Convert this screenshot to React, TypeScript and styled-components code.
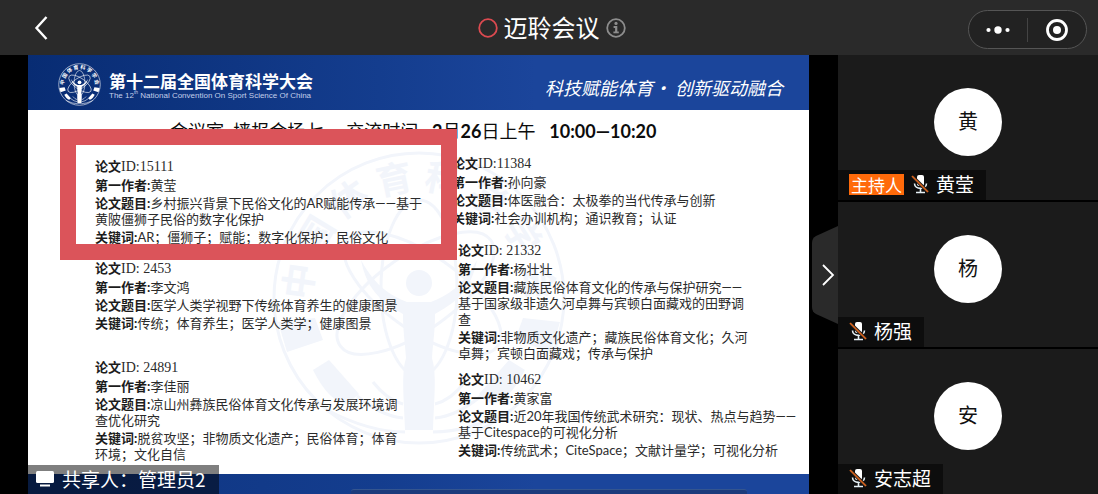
import React from "react";
import styled, { createGlobalStyle } from "styled-components";

const sans = `"Noto Sans CJK SC", "Noto Sans", sans-serif`;
const slideSans = `Lato, "Noto Sans CJK SC", sans-serif`;
const slideSerif = `"Liberation Serif", "Noto Sans CJK SC", serif`;

const GlobalStyle = createGlobalStyle`
  *, *::before, *::after { box-sizing: border-box; }
  body { margin: 0; background: #000; font-family: ${sans}; }
  h1, h2, p { margin: 0; padding: 0; }
  button { border: 0; padding: 0; background: none; color: inherit; font: inherit; cursor: pointer; }
`;

const Page = styled.div`
  display: flex;
  flex-direction: column;
  min-height: 100vh;
`;

const TopBar = styled.header`
  display: grid;
  grid-template-columns: 1fr auto 1fr;
  align-items: center;
  height: 55px;
  padding: 0 11px 0 28px;
  background: #2a2a2a;
  color: #fff;
`;

const BackButton = styled.button`
  display: flex;
  justify-self: start;
`;

const MeetingTitle = styled.div`
  display: flex;
  align-items: center;
  gap: 6px;
  padding-right: 12px;
`;

const MeetingName = styled.h1`
  padding-bottom: 2px;
  font-size: 24px;
  font-weight: 400;
  line-height: 32px;
`;

const InfoButton = styled.button`
  display: flex;
`;

const Capsule = styled.div`
  display: flex;
  align-items: center;
  justify-self: end;
  width: 119px;
  height: 39px;
  margin-top: 4px;
  border: 1px solid #555;
  border-radius: 20px;
  background: #222;
`;

const CapsuleButton = styled.button`
  display: flex;
  flex: 1;
  align-items: center;
  justify-content: center;
  height: 24px;

  & + & {
    border-left: 1px solid #444;
  }
`;

const Stage = styled.main`
  display: flex;
  flex: 1;
  padding-left: 28px;
`;

const Slide = styled.section`
  position: relative;
  display: flex;
  flex: 1;
  flex-direction: column;
  min-width: 0;
  background: #fff;
`;

const SlideBanner = styled.div`
  display: flex;
  align-items: center;
  height: 55px;
  padding: 4px 26px 0 30px;
  background: linear-gradient(90deg, #082c73, #143d8e 45%, #1b459b 65%, #1b459b);
  color: #fff;
`;

const Congress = styled.div`
  margin-left: 8px;
  padding-top: 1px;
`;

const CongressName = styled.h2`
  font-size: 17px;
  font-weight: 700;
  line-height: 22px;
  white-space: nowrap;
`;

const CongressSubtitle = styled.p`
  color: #c3cfea;
  font-family: "Liberation Sans", sans-serif;
  font-size: 8px;
  line-height: 8px;
  white-space: nowrap;

  sup {
    font-size: 5px;
    line-height: 1px;
  }
`;

const Slogan = styled.p`
  margin-left: auto;
  padding-top: 4px;
  font-size: 18px;
  font-style: italic;
  line-height: 24px;
  white-space: nowrap;
`;

const SlideBody = styled.div`
  position: relative;
  flex: 1;
  padding: 11px 0 12px 67px;
`;

const Watermark = styled.div`
  position: absolute;
  inset: 12px 0 0;
  display: grid;
  place-items: center;
  color: #f2f5fb;
`;

const SessionHeading = styled.h2`
  position: relative;
  padding-left: 75px;
  color: #0c0c0c;
  font-family: ${slideSans};
  font-size: 18px;
  font-weight: 400;
  line-height: 20px;
  white-space: pre;
`;

const PaperColumns = styled.div`
  position: relative;
  display: grid;
  grid-template-columns: minmax(0, 1fr) minmax(0, 1fr);
  padding-top: 15px;
`;

const PaperColumn = styled.div<{ $top?: number }>`
  padding-top: ${(p) => p.$top ?? 0}px;
`;

const PaperCard = styled.article<{ $before: number; $indent: number }>`
  display: flex;
  flex-direction: column;
  gap: 2px;
  padding: ${(p) => p.$before}px 0 0 ${(p) => p.$indent}px;
`;

const Field = styled.div`
  color: #2b2b2b;
  font-family: ${slideSans};
  font-size: 13px;
  line-height: 16px;
  white-space: pre;
`;

const IdField = styled(Field)`
  font-family: ${slideSerif};
  font-size: 14px;
`;

const Label = styled.b`
  color: #1c1c1c;
  font-size: 13px;
  font-weight: 700;
`;

const Line = styled.p`
  height: 16px;
`;

const Highlight = styled.div`
  position: absolute;
  top: 74px;
  left: 32px;
  width: 397px;
  height: 131px;
  border: 16px solid #db545a;
`;

const SlideFooter = styled.div`
  height: 20px;
  background: linear-gradient(90deg, #0e347f, #143d8e 45%, #1b459b 65%, #1b459b);
`;

const SharerTag = styled.div`
  position: absolute;
  bottom: 0;
  left: 0;
  display: flex;
  align-items: center;
  gap: 8px;
  height: 29px;
  padding: 0 13px 2px 8px;
  background: rgba(0, 0, 0, 0.5);
  color: #fff;
  font-size: 19px;
  line-height: 28px;
  white-space: nowrap;
`;

const HomeIndicator = styled.div`
  position: fixed;
  bottom: 0;
  left: 32%;
  right: 32%;
  height: 5px;
  border-top: 1px solid #34558f;
  border-radius: 3px 3px 0 0;
  background: #1c3b7c;
`;

const Gutter = styled.div`
  display: flex;
  align-items: center;
  justify-content: flex-end;
  width: 29px;
`;

const CollapseButton = styled.button`
  display: flex;
`;

const Sidebar = styled.aside`
  display: flex;
  flex-direction: column;
  gap: 2px;
  width: 260px;
`;

const Tile = styled.div`
  display: flex;
  flex: 1;
  flex-direction: column;
  background: #1b1b1b;
`;

const AvatarArea = styled.div`
  display: grid;
  flex: 1;
  place-items: center;
  padding-top: 18px;
`;

const Avatar = styled.div`
  display: grid;
  place-items: center;
  width: 68px;
  height: 68px;
  padding-bottom: 2px;
  border-radius: 50%;
  background: #fff;
  color: #111;
  font-size: 20px;
  line-height: 28px;
`;

const NameBar = styled.div`
  display: flex;
  align-items: center;
  align-self: flex-start;
  gap: 7px;
  height: 30px;
  padding: 0 12px 2px 11px;
  background: #0d0d0d;
  color: #fff;
  font-size: 19px;
  line-height: 28px;
  white-space: nowrap;
`;

const HostBadge = styled.span`
  padding: 0 2px;
  background: #ff6a0a;
  font-size: 17px;
  line-height: 21px;
`;

const ringText = "中国体育科学学会".split("");

function Emblem({ size, boldness }: { size: number; boldness: number }) {
  return (
    <svg width={size} height={size} viewBox="-150 -150 300 300" fill="none" stroke="currentColor" aria-hidden="true">
      <circle r="145" strokeWidth={boldness} />
      <g fill="currentColor" stroke="none" fontSize="36" fontWeight="700" textAnchor="middle">
        {ringText.map((ch, i) => (
          <text key={i} y="-108" transform={`rotate(${-82 + i * 23.4})`}>
            {ch}
          </text>
        ))}
      </g>
      <g fill="currentColor" stroke="none">
        <path d="M-141 24L-104 20L-96 42L-132 54Z" />
        <path d="M-106 72L-90 62L-60 96L-72 106Q-90 104-106 72Z" />
        <path d="M141 24L104 20L96 42L132 54Z" />
        <path d="M106 72L90 62L60 96L72 106Q90 104 106 72Z" />
      </g>
      <g strokeWidth={boldness}>
        <ellipse rx="92" ry="38" cy="-6" transform="rotate(35)" />
        <ellipse rx="92" ry="38" cy="-6" transform="rotate(-35)" />
        <ellipse rx="38" ry="88" cy="-10" />
        <path d="M-92 112Q-50 134-14 134M92 112Q50 134 14 134" />
        <path d="M-62 98Q-38 118-16 120M62 98Q38 118 16 120" />
        <path d="M-46 84Q-32 102-16 106M46 84Q32 102 16 106" />
      </g>
      <g fill="currentColor" stroke="none">
        <circle cy="-15" r="13" />
        <path d="M-58-38C-52-6-34 6-16 16C-16 34-14 44-13 60C-18 76-15 100-14 132H14C15 100 18 76 13 60C14 44 16 34 16 16C34 6 52-6 58-38C44-12 28-2 12 4H-12C-28-2-44-12-58-38Z" />
      </g>
    </svg>
  );
}

function MutedMic() {
  return (
    <svg width="18" height="20" viewBox="0 0 18 20" fill="none" role="img" aria-label="已静音">
      <rect x="6" y="1" width="7" height="11" rx="2" fill="#fff" />
      <path d="M3.5 9.5C3.5 16 15.5 16 15.5 9.5M9.5 14.5V18M5 18.5H14" stroke="#e6f0f5" strokeWidth="1.6" />
      <path d="M1.5 2.5L17 18" stroke="#1b1b1b" strokeWidth="3.4" />
      <path d="M1 2L17 18" stroke="#d9641c" strokeWidth="1.7" />
    </svg>
  );
}

interface Paper {
  id: string;
  author: string;
  title: string[];
  keywords: string[];
  before: number;
  indent?: number;
}

const leftPapers: Paper[] = [
  {
    id: "15111",
    author: "黄莹",
    title: ["乡村振兴背景下民俗文化的AR赋能传承——基于", "黄陂僵狮子民俗的数字化保护"],
    keywords: ["AR；僵狮子；赋能；数字化保护；民俗文化"],
    before: 0,
  },
  {
    id: " 2453",
    author: "李文鸿",
    title: ["医学人类学视野下传统体育养生的健康图景"],
    keywords: ["传统；体育养生；医学人类学；健康图景"],
    before: 16,
  },
  {
    id: " 24891",
    author: "李佳丽",
    title: ["凉山州彝族民俗体育文化传承与发展环境调", "查优化研究"],
    keywords: ["脱贫攻坚；非物质文化遗产；民俗体育；体育", "环境；文化自信"],
    before: 29,
  },
];

const rightPapers: Paper[] = [
  {
    id: "11384",
    author: "孙向豪",
    title: ["体医融合：太极拳的当代传承与创新"],
    keywords: ["社会办训机构；通识教育；认证"],
    before: 0,
  },
  {
    id: " 21332",
    author: "杨壮壮",
    title: [
      "藏族民俗体育文化的传承与保护研究——",
      "基于国家级非遗久河卓舞与宾顿白面藏戏的田野调",
      "查",
    ],
    keywords: ["非物质文化遗产；藏族民俗体育文化；久河", "卓舞；宾顿白面藏戏；传承与保护"],
    before: 17,
    indent: 6,
  },
  {
    id: " 10462",
    author: "黄家富",
    title: ["近20年我国传统武术研究：现状、热点与趋势——", "基于Citespace的可视化分析"],
    keywords: ["传统武术；CiteSpace；文献计量学；可视化分析"],
    before: 11,
    indent: 6,
  },
];

function LabelledLines({ label, lines }: { label: string; lines: string[] }) {
  return (
    <Field>
      {lines.map((line, i) => (
        <Line key={line}>
          {i === 0 && <Label>{label}:</Label>}
          {line}
        </Line>
      ))}
    </Field>
  );
}

function PaperEntry({ paper }: { paper: Paper }) {
  return (
    <PaperCard $before={paper.before} $indent={paper.indent ?? 0}>
      <IdField>
        <Line>
          <Label>论文</Label>ID:{paper.id}
        </Line>
      </IdField>
      <LabelledLines label="第一作者" lines={[paper.author]} />
      <LabelledLines label="论文题目" lines={paper.title} />
      <LabelledLines label="关键词" lines={paper.keywords} />
    </PaperCard>
  );
}

const participants = [
  { name: "黄莹", initial: "黄", host: true },
  { name: "杨强", initial: "杨", host: false },
  { name: "安志超", initial: "安", host: false },
];

export default function App() {
  return (
    <Page>
      <GlobalStyle />
      <TopBar>
        <BackButton aria-label="返回">
          <svg width="24" height="26" viewBox="0 0 24 26" fill="none" stroke="#fff" strokeWidth="2.4">
            <path d="M18.5 2L8.5 13L18.5 24" />
          </svg>
        </BackButton>
        <MeetingTitle>
          <svg width="20" height="20" viewBox="0 0 20 20" fill="none" aria-hidden="true">
            <circle cx="10" cy="10" r="8.8" stroke="#dc4a50" strokeWidth="1.8" />
          </svg>
          <MeetingName>迈聆会议</MeetingName>
          <InfoButton aria-label="会议信息">
            <svg width="20" height="20" viewBox="0 0 20 20" fill="none" stroke="#8d8d8d">
              <circle cx="10" cy="10" r="8.8" strokeWidth="1.8" />
              <circle cx="10" cy="5.4" r="1.6" fill="#8d8d8d" stroke="none" />
              <path d="M7.6 9H10.2V14" strokeWidth="2.2" />
              <path d="M7.4 14.4H12.8" strokeWidth="1.8" />
            </svg>
          </InfoButton>
        </MeetingTitle>
        <Capsule>
          <CapsuleButton aria-label="更多">
            <svg width="24" height="8" viewBox="0 0 24 8" fill="#fff">
              <circle cx="2.5" cy="4" r="2.1" />
              <circle cx="12" cy="4" r="3.7" />
              <circle cx="21.5" cy="4" r="2.1" />
            </svg>
          </CapsuleButton>
          <CapsuleButton aria-label="关闭">
            <svg width="22" height="22" viewBox="0 0 22 22" fill="none">
              <circle cx="11" cy="11" r="9.5" stroke="#fff" strokeWidth="2.8" />
              <circle cx="11" cy="11" r="4" fill="#fff" />
            </svg>
          </CapsuleButton>
        </Capsule>
      </TopBar>

      <Stage>
        <Slide>
          <SlideBanner>
            <Emblem size={43} boldness={4} />
            <Congress>
              <CongressName>第十二届全国体育科学大会</CongressName>
              <CongressSubtitle>
                The 12<sup>th</sup> National Convention On Sport Science Of China
              </CongressSubtitle>
            </Congress>
            <Slogan>科技赋能体育· 创新驱动融合</Slogan>
          </SlideBanner>
          <SlideBody>
            <Watermark>
              <Emblem size={300} boldness={3} />
            </Watermark>
            <SessionHeading>
              会议室  墙报会场七     交流时间   <b>2</b>月<b>26</b>日上午   <b>10:00—10:20</b>
            </SessionHeading>
            <PaperColumns>
              <PaperColumn $top={3}>
                {leftPapers.map((p) => (
                  <PaperEntry key={p.id} paper={p} />
                ))}
              </PaperColumn>
              <PaperColumn>
                {rightPapers.map((p) => (
                  <PaperEntry key={p.id} paper={p} />
                ))}
              </PaperColumn>
            </PaperColumns>
          </SlideBody>
          <SlideFooter />
          <Highlight />
          <SharerTag>
            <svg width="18" height="17" viewBox="0 0 18 17" fill="#fff" aria-hidden="true">
              <rect y="1" width="18" height="12" rx="1.5" />
              <rect x="4" y="14.5" width="10" height="2" />
            </svg>
            共享人：管理员2
          </SharerTag>
        </Slide>

        <Gutter>
          <CollapseButton aria-label="收起成员列表">
            <svg width="26" height="98" viewBox="0 0 26 98" fill="none">
              <path d="M26 0L4 10Q0 12 0 17V81Q0 86 4 88L26 98Z" fill="#2a2a2a" />
              <path d="M11 39L21 49L11 59" stroke="#fff" strokeWidth="1.8" />
            </svg>
          </CollapseButton>
        </Gutter>

        <Sidebar>
          {participants.map((p) => (
            <Tile key={p.name}>
              <AvatarArea>
                <Avatar>{p.initial}</Avatar>
              </AvatarArea>
              <NameBar>
                {p.host && <HostBadge>主持人</HostBadge>}
                <MutedMic />
                {p.name}
              </NameBar>
            </Tile>
          ))}
        </Sidebar>
      </Stage>
      <HomeIndicator />
    </Page>
  );
}
